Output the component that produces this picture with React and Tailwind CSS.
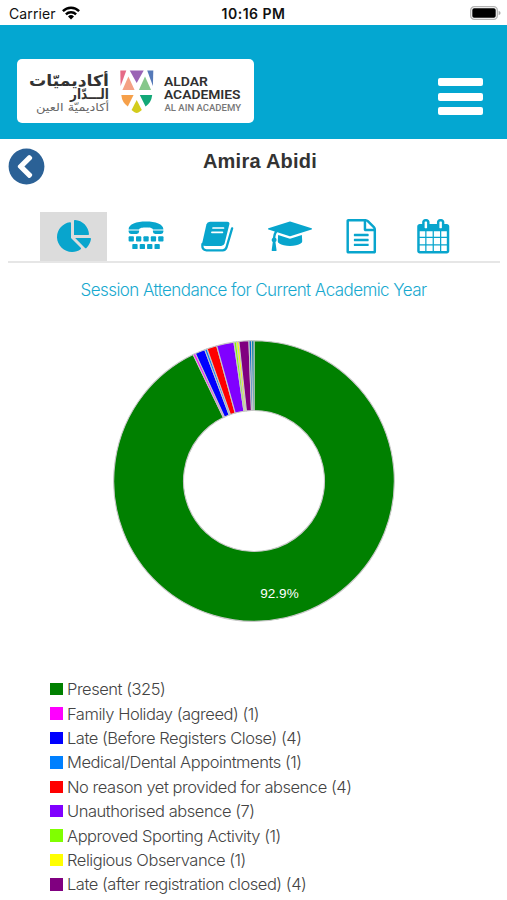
import React, { useState } from 'react'
import { FaChartPie, FaChevronCircleLeft } from 'react-icons/fa'

const sessions = [
  { label: 'Present', count: 325, color: '#008000' },
  { label: 'Family Holiday (agreed)', count: 1, color: '#ff00ff' },
  { label: 'Late (Before Registers Close)', count: 4, color: '#0000ff' },
  { label: 'Medical/Dental Appointments', count: 1, color: '#0080ff' },
  { label: 'No reason yet provided for absence', count: 4, color: '#ff0000' },
  { label: 'Unauthorised absence', count: 7, color: '#8000ff' },
  { label: 'Approved Sporting Activity', count: 1, color: '#80ff00' },
  { label: 'Religious Observance', count: 1, color: '#ffff00' },
  { label: 'Late (after registration closed)', count: 4, color: '#800080' },
]

// codes that only show up as slices, the legend stops before them
const otherSessions = [
  { count: 1, color: '#0066cc' },
  { count: 1, color: '#0080a0' },
]

const PieIcon = () => <FaChartPie className='w-[34px] h-8 -mt-0.5' />

const TtyIcon = () => (
  <svg viewBox='0 0 36 29' className='w-9 h-[29px] -mt-0.5' fill='currentColor'>
    <path d='M.6 8.600C.6 3 8.500 .6 18 .6S35.400 3 35.400 8.600H24.900C24.900 6.800 21 6.500 18 6.500S11.100 6.800 11.100 8.600z' />
    <path d='M.6 9.400H11.100V10.600Q11.100 13 8.700 13H3Q.6 13 .6 10.600zM24.900 9.400H35.400V10.600Q35.400 13 33 13H27.300Q24.900 13 24.900 10.600z' />
    {[0.6, 8, 15.400, 22.800, 30.200].map((x) => (
      <rect key={x} x={x} y='15.300' width='5.300' height='5.200' rx='.9' />
    ))}
    {[4.300, 11.700, 19.100, 26.500].map((x) => (
      <rect key={x} x={x} y='22.900' width='5.300' height='5.200' rx='.9' />
    ))}
  </svg>
)

const BookIcon = () => (
  <svg viewBox='0 0 33 31' className='w-[33px] h-[31px]' fill='none'>
    <path d='M9 .8H26.200Q29 .8 28.300 3.600L23.600 22.200Q22.900 24.900 20.200 24.900H5Q2 24.900 .8 24L5.400 3.500Q6.200 .8 9 .8z' fill='currentColor' />
    <path d='M1.500 23Q.6 29.300 5.500 29.300H21.600Q24.600 29.300 25.500 26.400L31.100 7.400' stroke='currentColor' strokeWidth='2.300' strokeLinecap='round' />
    <path d='M12 7H22.500M10.900 11.300H21.400' stroke='#fff' strokeWidth='1.700' strokeLinecap='round' />
  </svg>
)

const CapIcon = () => (
  <svg viewBox='0 0 2304 1792' className='w-11 h-[34.5px]' fill='currentColor'>
    <path d='M1774 836l18 316q4 69-82 128t-235 93.500-323 34.500-323-34.500-235-93.500-82-128l18-316 574 181q22 7 48 7t48-7zm530-324q0 23-22 31l-1120 352q-4 1-10 1t-10-1l-652-206q-43 34-71 111.500t-34 178.500q63 36 63 109 0 69-58 107l58 433q2 14-8 25-9 11-24 11h-192q-15 0-24-11-10-11-8-25l58-433q-58-38-58-107 0-73 65-111 11-207 98-330l-333-104q-22-8-22-31t22-31l1120-352q4-1 10-1t10 1l1120 352q22 8 22 31z' />
  </svg>
)

const FileIcon = () => (
  <svg viewBox='0 0 1792 1792' className='size-[34.5px]' fill='currentColor'>
    <path d='M1596 380q28 28 48 76t20 88v1152q0 40-28 68t-68 28h-1344q-40 0-68-28t-28-68v-1600q0-40 28-68t68-28h896q40 0 88 20t76 48zm-444-244v376h376q-10-29-22-41l-313-313q-12-12-41-22zm384 1528v-1024h-416q-40 0-68-28t-28-68v-416h-768v1536h1280zm-1024-864q0-14 9-23t23-9h704q14 0 23 9t9 23v64q0 14-9 23t-23 9h-704q-14 0-23-9t-9-23v-64zm736 224q14 0 23 9t9 23v64q0 14-9 23t-23 9h-704q-14 0-23-9t-9-23v-64q0-14 9-23t23-9h704zm0 256q14 0 23 9t9 23v64q0 14-9 23t-23 9h-704q-14 0-23-9t-9-23v-64q0-14 9-23t23-9h704z' />
  </svg>
)

const CalendarIcon = () => (
  <svg viewBox='0 0 1792 1792' className='size-[34.5px]' fill='currentColor'>
    <path d='M192 1664h288v-288h-288v288zm352 0h320v-288h-320v288zm-352-352h288v-320h-288v320zm352 0h320v-320h-320v320zm-352-384h288v-288h-288v288zm736 736h320v-288h-320v288zm-384-736h320v-288h-320v288zm768 736h288v-288h-288v288zm-384-352h320v-320h-320v320zm-352-864v-288q0-13-9.500-22.500t-22.500-9.500h-64q-13 0-22.500 9.500t-9.500 22.500v288q0 13 9.500 22.500t22.500 9.500h64q13 0 22.500-9.500t9.500-22.500zm736 864h288v-320h-288v320zm-384-384h320v-288h-320v288zm384 0h288v-288h-288v288zm32-480v-288q0-13-9.500-22.500t-22.500-9.500h-64q-13 0-22.500 9.500t-9.500 22.500v288q0 13 9.500 22.500t22.500 9.500h64q13 0 22.500-9.500t9.500-22.500zm384-64v1280q0 52-38 90t-90 38h-1408q-52 0-90-38t-38-90v-1280q0-52 38-90t90-38h128v-96q0-66 47-113t113-47h64q66 0 113 47t47 113v96h384v-96q0-66 47-113t113-47h64q66 0 113 47t47 113v96h128q52 0 90 38t38 90z' />
  </svg>
)

const tabs = [
  { id: 'attendance', Icon: PieIcon },
  { id: 'contact', Icon: TtyIcon },
  { id: 'homework', Icon: BookIcon },
  { id: 'grades', Icon: CapIcon },
  { id: 'reports', Icon: FileIcon },
  { id: 'calendar', Icon: CalendarIcon },
]

const StatusBar = () => (
  <div className="h-[25px] px-[9px] pt-[3px] grid grid-cols-3 items-center font-['Inter',sans-serif] text-[#111]">
    <div className='flex items-center gap-1.5'>
      <span className='text-[14px] leading-5 tracking-[0.1px]'>Carrier</span>
      <svg viewBox='0 0 18 14' className='w-[18px] h-3.5 -mt-0.5' fill='none' stroke='#000' strokeWidth='2.400'>
        <path d='M.9 5.200C5.400 .6 12.600 .6 17.100 5.200' />
        <path d='M3.900 8.300C6.700 5.500 11.300 5.500 14.100 8.300' />
        <path d='M9 13.400L6 10.400Q9 7.800 12 10.400z' fill='#000' stroke='none' />
      </svg>
    </div>
    <span className='text-center text-[14px] leading-5 font-semibold tracking-[0.5px]'>10:16 PM</span>
    <svg viewBox='0 0 31 14' className='w-[31px] h-3.5 justify-self-end -mt-0.5 -mr-[3px]'>
      <rect x='.7' y='.7' width='26.600' height='12.600' rx='3.600' fill='#fff' stroke='#b4b4b4' strokeWidth='1.300' />
      <rect x='2.300' y='2.300' width='23.400' height='9.400' rx='1.800' fill='#000' />
      <path d='M28.600 4.800Q30.600 5.500 30.600 7T28.600 9.200z' fill='#aaa' />
    </svg>
  </div>
)

const Logo = () => (
  <svg viewBox='0 0 237 64' className='w-[237px] h-16 bg-white rounded-[5px]'>
    <g fontFamily="'DejaVu Sans', sans-serif" fill='#333' direction='rtl'>
      <text x='92' y='27' fontSize='15.500' fontWeight='bold' textLength='80' lengthAdjust='spacingAndGlyphs'>أكاديميّات</text>
      <text x='92' y='40' fontSize='14' fontWeight='bold' textLength='39' lengthAdjust='spacingAndGlyphs'>الـــدّار</text>
      <text x='92' y='52' fontSize='11' fill='#666' textLength='73' lengthAdjust='spacingAndGlyphs'>أكاديميّة العين</text>
    </g>
    <path d='M103.300 11.500H109.300L103.600 27z' fill='#e56a86' />
    <path d='M112.700 11.500H126.700L119.700 24z' fill='#9a63b5' />
    <path d='M130.200 11.500H136.300L135.900 27z' fill='#5579b8' />
    <path d='M111.400 17.500L117.600 31H105.400z' fill='#f4a184' />
    <path d='M128 17.500L134.100 31H121.900z' fill='#86c78b' />
    <path d='M104.300 36H116.600L110.800 47.500Q105 43.500 104.300 36z' fill='#f6a04a' />
    <path d='M122.800 36H135.200Q134.400 43.500 128.600 47.500z' fill='#12a877' />
    <path d='M119.700 41L124.800 51Q121.500 54 119.700 54T114.600 51z' fill='#d3cc1c' />
    <g fontFamily="'Roboto', sans-serif" fill='#303030'>
      <text x='147' y='27.200' fontSize='13.500' fontWeight='600' textLength='44' lengthAdjust='spacingAndGlyphs'>ALDAR</text>
      <text x='147' y='39.800' fontSize='13.500' fontWeight='600' textLength='76.500' lengthAdjust='spacingAndGlyphs'>ACADEMIES</text>
      <text x='147.500' y='52' fontSize='9.800' fontWeight='500' fill='#777' textLength='76.500' lengthAdjust='spacingAndGlyphs'>AL AIN ACADEMY</text>
    </g>
  </svg>
)

const DonutChart = ({ data }) => {
  const total = data.reduce((sum, d) => sum + d.count, 0)
  const point = (r, a) => `${141 + r * Math.sin(a)} ${141 - r * Math.cos(a)}`

  let angle = 0
  const slices = data.map((d) => {
    const start = angle
    angle += (d.count / total) * Math.PI * 2
    const large = angle - start > Math.PI ? 1 : 0
    return {
      color: d.color,
      path: `M${point(140.3, start)}A140.3 140.3 0 ${large} 1 ${point(140.3, angle)}L${point(70.5, angle)}A70.5 70.5 0 ${large} 0 ${point(70.5, start)}Z`,
    }
  })

  return (
    <svg viewBox='0 0 282 282' className='size-[282px]'>
      {slices.map((s, i) => (
        <path key={i} d={s.path} fill={s.color} stroke='#c8c8c8' strokeWidth='1.100' />
      ))}
      <text x='166.500' y='258' textAnchor='middle' fill='#fff' fontSize='13.500' fontFamily="'Liberation Sans', sans-serif">
        {((data[0].count / total) * 100).toFixed(1)}%
      </text>
    </svg>
  )
}

const App = () => {
  const [activeTab, setActiveTab] = useState('attendance')

  return (
    <div className='w-full h-[900px] overflow-hidden bg-white flex flex-col'>
      <StatusBar />

      <header className='h-[114px] shrink-0 bg-[#04a7d1] pl-[17px] pr-6 pt-[34px] flex justify-between'>
        <div><Logo /></div>
        <button className='w-[45px] h-[37px] mt-[19px] flex flex-col justify-between'>
          <span className='h-2 w-full bg-white rounded-[2px]' />
          <span className='h-2 w-full bg-white rounded-[2px]' />
          <span className='h-2 w-full bg-white rounded-[2px]' />
        </button>
      </header>

      {/* Student name with the back button */}
      <div className='px-2 h-[73px] shrink-0 flex items-start'>
        <button className='mt-[9px]'>
          <FaChevronCircleLeft className='size-[37px] text-[#2b6196]' />
        </button>
        <h1 className="flex-1 mt-2 pr-[24px] text-center text-[20px] leading-7 font-bold tracking-[0.25px] text-[#333] font-['Liberation_Sans',sans-serif]">
          Amira Abidi
        </h1>
      </div>

      <nav className='ml-2 mr-[7px] pl-8 h-[51px] shrink-0 border-b-2 border-[#e6e6e6] flex gap-[5px]'>
        {tabs.map(({ id, Icon }) => (
          <button
            key={id}
            onClick={() => setActiveTab(id)}
            className={`w-[67px] h-[49px] flex items-center justify-center text-[#08a5cd] ${activeTab === id ? 'bg-[#dcdcdc]' : ''}`}
          >
            <Icon />
          </button>
        ))}
      </nav>

      <h2 className="mt-[14px] text-center text-[17px] leading-[26px] font-light tracking-[-0.57px] text-[#18a9cf] font-['Inter',sans-serif]">
        Session Attendance for Current Academic Year
      </h2>

      <div className='mt-[37px] flex justify-center'>
        <DonutChart data={[...sessions, ...otherSessions]} />
      </div>

      <ul className='mt-[55px] pl-[50px]'>
        {sessions.map((s) => (
          <li key={s.label} className='h-[24.4px] flex items-center gap-[4.5px]'>
            <span className='size-[12.5px] shrink-0' style={{ backgroundColor: s.color }} />
            <span className="text-[16.5px] leading-6 font-light tracking-[-0.46px] text-[#444] font-['Inter',sans-serif]">
              {s.label} ({s.count})
            </span>
          </li>
        ))}
      </ul>
    </div>
  )
}

export default App
